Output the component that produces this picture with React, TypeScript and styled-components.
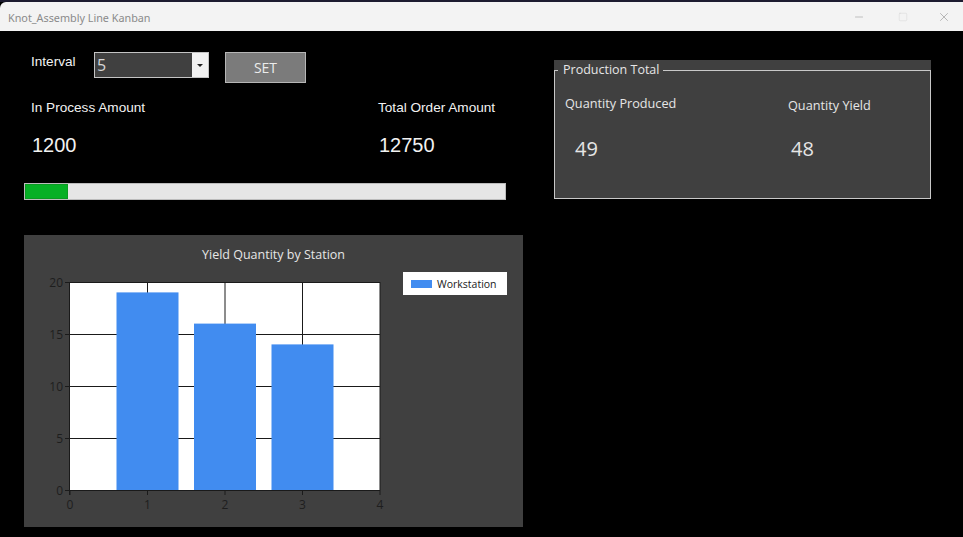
import React from "react";
import styled, { createGlobalStyle } from "styled-components";
import { Minus, Square, X } from "lucide-react";

const Global = createGlobalStyle`
  html, body { margin: 0; padding: 0; background: #000; }
  body { width: 963px; height: 537px; overflow: hidden; }
  * { box-sizing: border-box; }
`;

const Window = styled.div`
  width: 963px;
  height: 537px;
  background: #000;
  border-top: 2px solid #1d1b30;
  display: flex;
  flex-direction: column;
`;

const TitleBar = styled.div`
  height: 29px;
  background: #f3f3f3;
  border-top-left-radius: 6px;
  display: flex;
  align-items: center;
  padding-left: 8px;
  font-family: "Noto Sans", sans-serif;
  font-size: 10.8px;
  color: #8a8a8a;
`;

const TitleText = styled.div`
  flex: 1;
  padding-top: 1px;
`;

const Controls = styled.div`
  display: flex;
  align-items: center;
  height: 100%;
`;

const CtrlBtn = styled.div<{ $dim?: boolean; $w: number }>`
  width: ${(p) => p.$w}px;
  height: 100%;
  display: flex;
  align-items: center;
  justify-content: center;
  color: ${(p) => (p.$dim ? "#d0d0d0" : "#8a8a8a")};
`;

const Content = styled.div`
  flex: 1;
  display: flex;
  padding: 21px 0 0 24px;
  gap: 31px;
`;

const LeftCol = styled.div`
  width: 499px;
  display: flex;
  flex-direction: column;
`;

const TopRow = styled.div`
  display: flex;
  align-items: flex-start;
  height: 31px;
`;

const Label = styled.div`
  font-family: "Liberation Sans", Arial, sans-serif;
  font-size: 13.6px;
  line-height: 15px;
  color: #f2f2f2;
`;

const IntervalLabel = styled(Label)`
  width: 70px;
  padding-left: 7px;
  padding-top: 2px;
`;

const Combo = styled.div`
  width: 115px;
  height: 26px;
  border: 1px solid #c4c4c4;
  display: flex;
  background: #404040;
`;

const ComboText = styled.div`
  flex: 1;
  font-family: "Open Sans", sans-serif;
  font-size: 16px;
  line-height: 24px;
  color: #d6d6d6;
  padding-left: 2px;
`;

const ComboArrow = styled.div`
  width: 16px;
  background: #f2f2f2;
  display: flex;
  align-items: center;
  justify-content: center;
  &::after {
    content: "";
    border-left: 3px solid transparent;
    border-right: 3px solid transparent;
    border-top: 3px solid #222;
    margin-top: 1px;
  }
`;

const SetButton = styled.div`
  margin-left: 16px;
  width: 81px;
  height: 31px;
  background: #7b7b7b;
  border: 1px solid #b6b6b6;
  display: flex;
  align-items: center;
  justify-content: center;
  font-family: "Open Sans", sans-serif;
  font-size: 14px;
  color: #ececec;
`;

const Stats = styled.div`
  display: grid;
  grid-template-columns: 347px auto;
  padding-left: 7px;
  margin-top: 17px;
  row-gap: 19px;
`;

const BigValue = styled.div`
  font-family: "Liberation Sans", Arial, sans-serif;
  font-size: 20px;
  line-height: 23px;
  color: #f2f2f2;
  padding-left: 1px;
`;

const Progress = styled.div`
  margin-top: 26px;
  width: 482px;
  height: 17px;
  background: #e6e6e6;
  border: 1px solid #bcbcbc;
`;

const ProgressFill = styled.div`
  height: 100%;
  background: #06b025;
  border: 1px solid #0a9a22;
`;

const ChartPanel = styled.div`
  margin-top: 35px;
  width: 499px;
  height: 292px;
  background: #404040;
  display: flex;
  flex-direction: column;
  padding-top: 11px;
`;

const ChartTitle = styled.div`
  text-align: center;
  font-family: "Open Sans", sans-serif;
  font-size: 12.5px;
  line-height: 17px;
  color: #e6e6e6;
`;

const ChartBody = styled.div`
  margin-top: 9px;
  display: flex;
  align-items: flex-start;
`;

const Legend = styled.div`
  margin-left: 9px;
  width: 104px;
  height: 23px;
  background: #fff;
  display: flex;
  align-items: center;
  padding-left: 8px;
  gap: 5px;
  font-family: "Open Sans", sans-serif;
  font-size: 10.5px;
  color: #1a1a1a;
`;

const Swatch = styled.div`
  width: 21px;
  height: 8px;
  background: #418cf0;
`;

const RightCol = styled.div`
  padding-top: 8px;
`;

const GroupWrap = styled.div`
  width: 377px;
  background: #404040;
  padding-top: 1px;
`;

const GroupBox = styled.fieldset`
  margin: 0;
  padding: 0;
  height: 138px;
  border: 1px solid #c8c8c8;
  min-width: 0;
`;

const GroupLegend = styled.legend`
  margin-left: 3px;
  padding: 0 4px 0 5px;
  font-family: "Open Sans", sans-serif;
  font-size: 12.5px;
  line-height: 18px;
  color: #e6e6e6;
`;

const GroupGrid = styled.div`
  display: grid;
  grid-template-columns: 223px auto;
  padding-left: 10px;
  margin-top: 16px;
  row-gap: 23px;
`;

const GroupLabel = styled.div<{ $shift?: number }>`
  font-family: "Open Sans", sans-serif;
  font-size: 12.7px;
  line-height: 17px;
  color: #e6e6e6;
  margin-top: ${(p) => p.$shift ?? 0}px;
`;

const GroupValue = styled.div<{ $indent: number }>`
  font-family: "Open Sans", sans-serif;
  font-size: 20px;
  line-height: 24px;
  color: #e6e6e6;
  padding-left: ${(p) => p.$indent}px;
`;

const data = [19, 16, 14];

function Chart() {
  const x0 = 46;
  const y0 = 10;
  const w = 310;
  const h = 208;
  const ux = w / 4;
  const uy = h / 20;
  const axisFont = { fontFamily: "Open Sans, sans-serif", fontSize: 12 };
  return (
    <svg width={370} height={255}>
      <rect x={x0} y={y0} width={w} height={h} fill="#fff" />
      {[5, 10, 15, 20].map((v) => (
        <line key={"h" + v} x1={x0} x2={x0 + w} y1={y0 + h - v * uy + 0.5} y2={y0 + h - v * uy + 0.5} stroke="#1a1a1a" strokeWidth={1} />
      ))}
      {[1, 2, 3, 4].map((v) => (
        <line key={"v" + v} x1={x0 + v * ux} x2={x0 + v * ux} y1={y0} y2={y0 + h} stroke="#1a1a1a" strokeWidth={1} />
      ))}
      {data.map((d, i) => {
        const cx = x0 + (i + 1) * ux;
        return (
          <rect key={i} x={cx - 0.4 * ux} y={y0 + h - d * uy} width={0.8 * ux} height={d * uy} fill="#418cf0" />
        );
      })}
      <line x1={x0 - 0.5} x2={x0 - 0.5} y1={y0} y2={y0 + h + 5} stroke="#1a1a1a" />
      <line x1={x0 - 5} x2={x0 + w} y1={y0 + h + 0.5} y2={y0 + h + 0.5} stroke="#1a1a1a" />
      {[0, 5, 10, 15, 20].map((v) => (
        <g key={"yl" + v}>
          <line x1={x0 - 5} x2={x0} y1={y0 + h - v * uy + 0.5} y2={y0 + h - v * uy + 0.5} stroke="#1a1a1a" />
          <text x={x0 - 7} y={y0 + h - v * uy + 4.5} textAnchor="end" fill="#1e1e1e" {...axisFont}>
            {v}
          </text>
        </g>
      ))}
      {[0, 1, 2, 3, 4].map((v) => (
        <g key={"xl" + v}>
          <line x1={x0 + v * ux} x2={x0 + v * ux} y1={y0 + h} y2={y0 + h + 5} stroke="#1a1a1a" />
          <text x={x0 + v * ux} y={y0 + h + 19} textAnchor="middle" fill="#1e1e1e" {...axisFont}>
            {v}
          </text>
        </g>
      ))}
    </svg>
  );
}

const inProcess = 1200;
const totalOrder = 12750;
const progress = 0.09;

export default function App() {
  return (
    <>
      <Global />
      <Window>
        <TitleBar>
          <TitleText>Knot_Assembly Line Kanban</TitleText>
          <Controls>
            <CtrlBtn $w={44}>
              <Minus size={12} strokeWidth={1} />
            </CtrlBtn>
            <CtrlBtn $w={44} $dim>
              <Square size={10} strokeWidth={1} />
            </CtrlBtn>
            <CtrlBtn $w={38}>
              <X size={14} strokeWidth={1} />
            </CtrlBtn>
          </Controls>
        </TitleBar>
        <Content>
          <LeftCol>
            <TopRow>
              <IntervalLabel>Interval</IntervalLabel>
              <Combo>
                <ComboText>5</ComboText>
                <ComboArrow />
              </Combo>
              <SetButton>SET</SetButton>
            </TopRow>
            <Stats>
              <Label>In Process Amount</Label>
              <Label>Total Order Amount</Label>
              <BigValue>{inProcess}</BigValue>
              <BigValue>{totalOrder}</BigValue>
            </Stats>
            <Progress>
              <ProgressFill style={{ width: `${progress * 100}%` }} />
            </Progress>
            <ChartPanel>
              <ChartTitle>Yield Quantity by Station</ChartTitle>
              <ChartBody>
                <Chart />
                <Legend>
                  <Swatch />
                  Workstation
                </Legend>
              </ChartBody>
            </ChartPanel>
          </LeftCol>
          <RightCol>
            <GroupWrap>
              <GroupBox>
                <GroupLegend>Production Total</GroupLegend>
                <GroupGrid>
                  <GroupLabel>Quantity Produced</GroupLabel>
                  <GroupLabel $shift={2}>Quantity Yield</GroupLabel>
                  <GroupValue $indent={10}>49</GroupValue>
                  <GroupValue $indent={3}>48</GroupValue>
                </GroupGrid>
              </GroupBox>
            </GroupWrap>
          </RightCol>
        </Content>
      </Window>
    </>
  );
}
